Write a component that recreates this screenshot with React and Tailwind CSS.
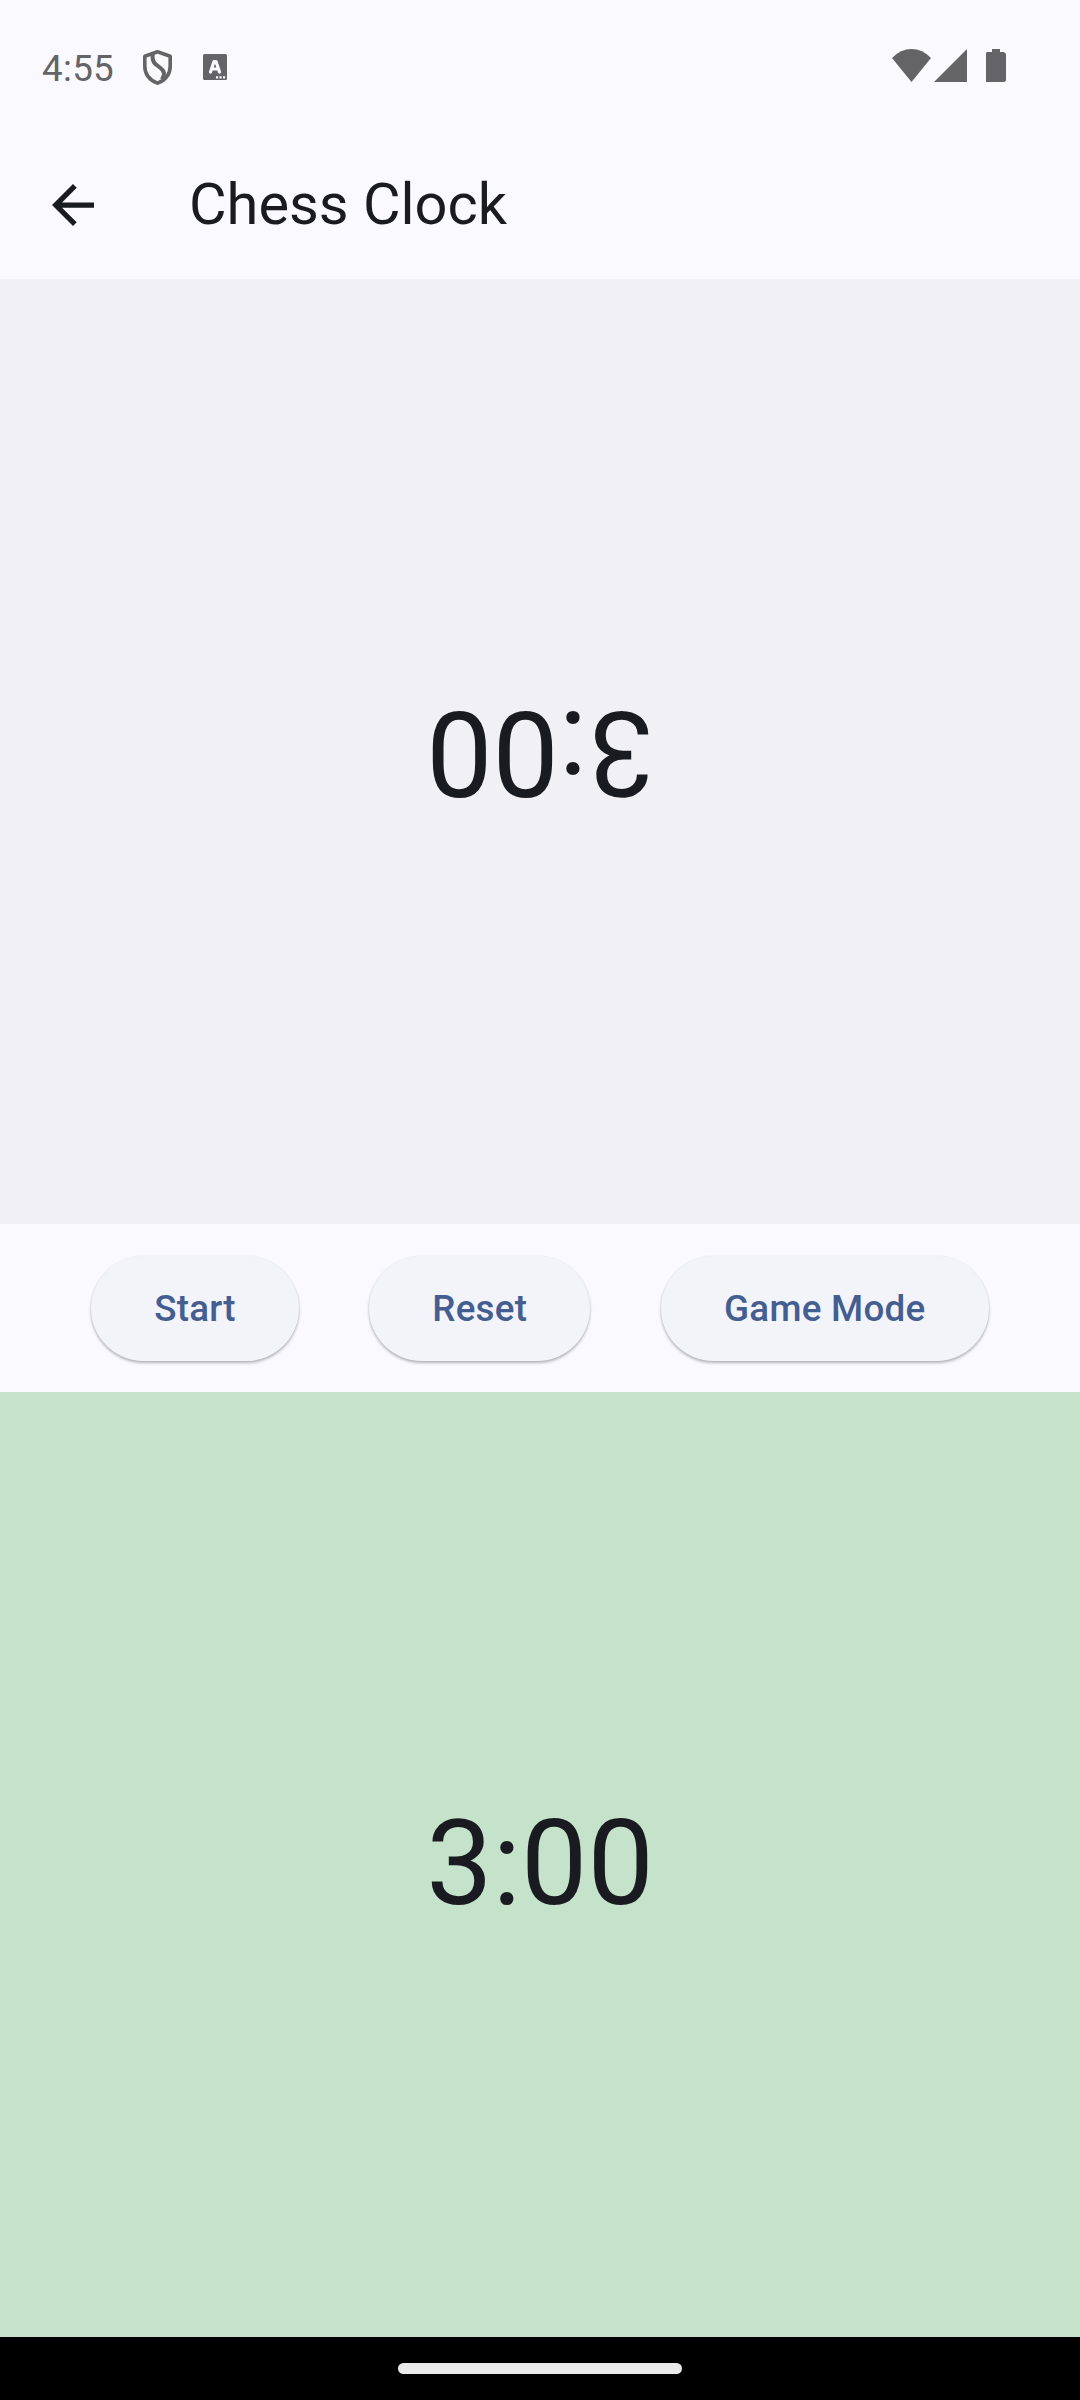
const pill = "flex h-[105px] items-center justify-center rounded-full bg-[#f3f4fa] pt-px text-[36.75px] font-medium tracking-[0.26px] text-[#445e91] shadow-[0_2px_3px_rgba(0,0,0,0.28),0_0_2px_rgba(0,0,0,0.06)]";

export default function App() {
  return (
    <div className="flex h-[2400px] w-[1080px] flex-col overflow-hidden bg-[#faf9ff] font-[Roboto,sans-serif] text-[#1a1b20]">
      <header className="flex h-[136px] shrink-0 items-start pl-[42px] pr-[72px] text-[#646466]">
        <span className="mt-[50px] w-[101px] text-[36.75px] leading-[38px] tracking-[0.3px]">4:55</span>
        <svg className="mt-[50px] h-[35px] w-[29px]" viewBox="0 0 29 35" fill="none" stroke="currentColor" strokeWidth="3.6" strokeLinejoin="round">
          <path d="M14.5 1.8 27.2 6.2v10c0 8-5.2 14-12.700 17C7 30.200 1.800 24.200 1.800 16.200v-10z" />
          <path d="M9.800 4C9 9 9.500 12 13 14.500l4.500 3.500c4.500 3.500 4.300 7.500 1.300 11.500" strokeWidth="4" />
        </svg>
        <svg className="ml-[31px] mt-[54px] h-[26px] w-[24px]" viewBox="0 0 24 26">
          <rect width="24" height="26" rx="1.5" fill="currentColor" />
          <path d="M7.500 18 11 7.500h2L16.500 18M9 15h6" fill="none" stroke="#faf9ff" strokeWidth="3.2" strokeLinejoin="round" strokeLinecap="round" />
          <path d="M13 22.300h2.200v2.200H13zM16.500 22.300h2.200v2.200h-2.200zM20 22.300h2.200v2.200H20z" fill="#faf9ff" />
        </svg>
        <div className="grow" />
        <svg className="mt-[49px] h-[33px] w-[116px]" viewBox="0 0 116 33" fill="currentColor">
          <path d="M0 9Q8.500 0 19.500 0T39 9L19.500 33z" />
          <path d="M75 0v33H42z" />
          <path d="M100 3V0h8v3h4l2 2v26.500l-1.500 1.500H94V4l1-1z" />
        </svg>
      </header>
      <div className="flex h-[143px] shrink-0 items-center pb-[5px] pl-[52px]">
        <svg className="h-[42px] w-[42px]" viewBox="4 4 16 16" fill="currentColor">
          <path d="M20 11H7.830l5.590-5.590L12 4l-8 8 8 8 1.410-1.410L7.830 13H20z" />
        </svg>
        <h1 className="-mt-[1px] ml-[95px] text-[57.75px] leading-none">Chess Clock</h1>
      </div>
      <div className="flex h-[945px] shrink-0 items-center justify-center bg-[#f0f0f5]">
        <span className="rotate-180 text-[118.125px] leading-[138px]">3:00</span>
      </div>
      <div className="flex h-[168px] shrink-0 items-center justify-center gap-[70.5px]">
        <button className={pill + " w-[207.5px]"}>Start</button>
        <button className={pill + " w-[221px]"}>Reset</button>
        <button className={pill + " w-[328px]"}>Game Mode</button>
      </div>
      <div className="flex h-[945px] shrink-0 items-center justify-center bg-[#c5e3cb] pb-[2px]">
        <span className="text-[118.125px] leading-[138px]">3:00</span>
      </div>
      <footer className="flex h-[63px] shrink-0 items-center justify-center bg-black">
        <div className="h-[11px] w-[284px] rounded-full bg-[#ebebeb]" />
      </footer>
    </div>
  );
}
